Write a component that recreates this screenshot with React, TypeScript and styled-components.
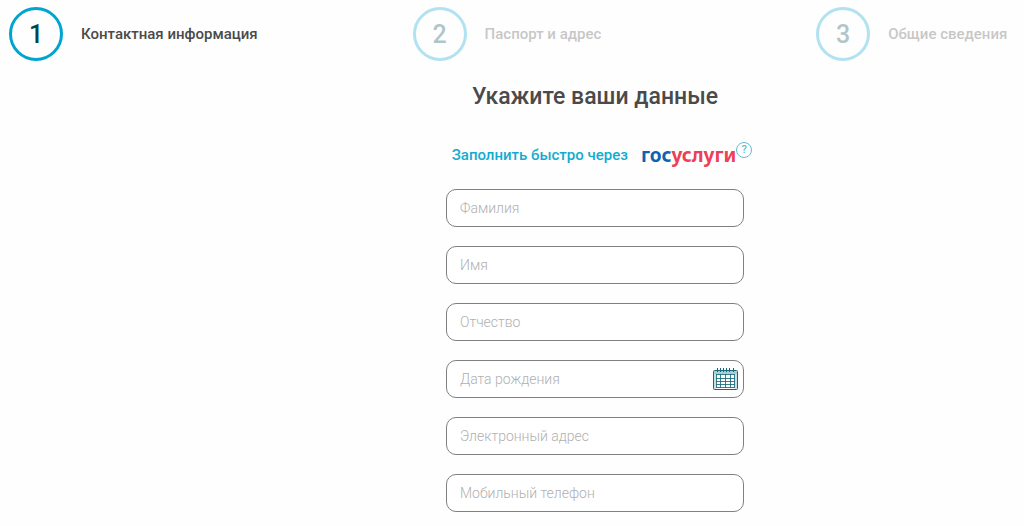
import React from "react";
import styled, { createGlobalStyle } from "styled-components";

const GlobalStyle = createGlobalStyle`
  * { box-sizing: border-box; }
  body {
    margin: 0;
    background: #fefefe;
    color: #4a4a4a;
    font-family: Roboto, "Noto Sans", sans-serif;
  }
`;

const Steps = styled.ol`
  display: grid;
  grid-template-columns: 2fr 2fr 1fr;
  margin: 0;
  padding: 7px 6px 0 9px;
  list-style: none;
`;

const Step = styled.li<{ $active?: boolean }>`
  display: flex;
  align-items: center;
  gap: 18px;
  opacity: ${(p) => (p.$active ? 1 : 0.3)};
`;

const StepNumber = styled.span`
  display: flex;
  align-items: center;
  justify-content: center;
  flex: none;
  width: 54px;
  height: 54px;
  border: 3px solid #00a5cf;
  border-radius: 50%;
  color: #004650;
  font-size: 25px;
  font-weight: 500;
`;

const StepLabel = styled.span`
  font-size: 15px;
  font-weight: 500;
  line-height: 20px;
  white-space: nowrap;
`;

const Main = styled.main`
  display: flex;
  flex-direction: column;
  align-items: center;
  padding: 20px 0 12px 166px;
`;

const Title = styled.h1`
  margin: 0;
  font-size: 23px;
  font-weight: 500;
  line-height: 32px;
`;

const QuickFill = styled.div`
  display: flex;
  align-items: center;
  margin: 26px 0 17px;
  padding-left: 14px;
`;

const QuickLink = styled.a`
  display: flex;
  align-items: center;
  gap: 13px;
  color: #14abd0;
  font-size: 15px;
  font-weight: 500;
  line-height: 33px;
  text-decoration: none;
`;

const Logo = styled.span`
  color: #0d63b0;
  font-family: "Noto Sans", sans-serif;
  font-size: 19px;
  font-weight: 700;
`;

const LogoAccent = styled.span`
  color: #ee3f58;
`;

const HelpButton = styled.button`
  align-self: flex-start;
  width: 16px;
  height: 16px;
  margin-top: 3px;
  padding: 0;
  border: 1px solid #62bcd6;
  border-radius: 50%;
  background: none;
  color: #62bcd6;
  font: 500 11px/14px Roboto, sans-serif;
`;

const Form = styled.form`
  display: grid;
  gap: 19px;
  width: 298px;
`;

const Field = styled.div`
  display: flex;
  align-items: center;
  height: 38px;
  padding: 0 5px 0 13px;
  border: 1px solid #808080;
  border-radius: 10px;
  background: #fff;
`;

const Input = styled.input`
  flex: 1;
  min-width: 0;
  padding: 0;
  border: 0;
  outline: 0;
  background: none;
  color: #4a4a4a;
  font: 300 14px/20px Roboto, "Noto Sans", sans-serif;

  &::placeholder {
    color: #b0b0b0;
    opacity: 1;
  }
`;

const CalendarButton = styled.button`
  display: flex;
  padding: 0;
  border: 0;
  background: none;
`;

const CalendarIcon = () => (
  <svg width="25" height="23" viewBox="0 0 25 23" fill="none" aria-hidden="true">
    <path d="M1 3h23v3H1z" fill="#a9cdd4" />
    <path d="M1 6h2v15H1zM22 6h2v15h-2z" fill="#c9e0e4" />
    <rect x="0.5" y="2.5" width="24" height="19" rx="1" stroke="#17697a" />
    <path d="M4.5 0v4M7.5 0v4M10.5 0v4M13.5 0v4M16.5 0v4M20.5 0v4" stroke="#17697a" />
    <path
      d="M3 6.5h19M3 10.5h19M3 13.5h19M3 16.5h19M3 19.5h19M3.5 6v14M7.5 6v14M12.5 6v14M17.5 6v14M21.5 6v14"
      stroke="#17697a"
      strokeOpacity="0.85"
    />
  </svg>
);

const steps = ["Контактная информация", "Паспорт и адрес", "Общие сведения"];

const fields = [
  { name: "surname", label: "Фамилия", type: "text" },
  { name: "name", label: "Имя", type: "text" },
  { name: "patronymic", label: "Отчество", type: "text" },
  { name: "birthday", label: "Дата рождения", type: "text", calendar: true },
  { name: "email", label: "Электронный адрес", type: "email" },
  { name: "phone", label: "Мобильный телефон", type: "tel" },
];

export default function App() {
  return (
    <>
      <GlobalStyle />
      <Steps>
        {steps.map((label, i) => (
          <Step key={label} $active={i === 0} aria-current={i === 0 ? "step" : undefined}>
            <StepNumber>{i + 1}</StepNumber>
            <StepLabel>{label}</StepLabel>
          </Step>
        ))}
      </Steps>
      <Main>
        <Title>Укажите ваши данные</Title>
        <QuickFill>
          <QuickLink href="#gosuslugi">
            Заполнить быстро через
            <Logo>
              гос<LogoAccent>услуги</LogoAccent>
            </Logo>
          </QuickLink>
          <HelpButton type="button">?</HelpButton>
        </QuickFill>
        <Form>
          {fields.map((f) => (
            <Field key={f.name}>
              <Input name={f.name} type={f.type} placeholder={f.label} aria-label={f.label} />
              {f.calendar && (
                <CalendarButton type="button" aria-label="Открыть календарь">
                  <CalendarIcon />
                </CalendarButton>
              )}
            </Field>
          ))}
        </Form>
      </Main>
    </>
  );
}
